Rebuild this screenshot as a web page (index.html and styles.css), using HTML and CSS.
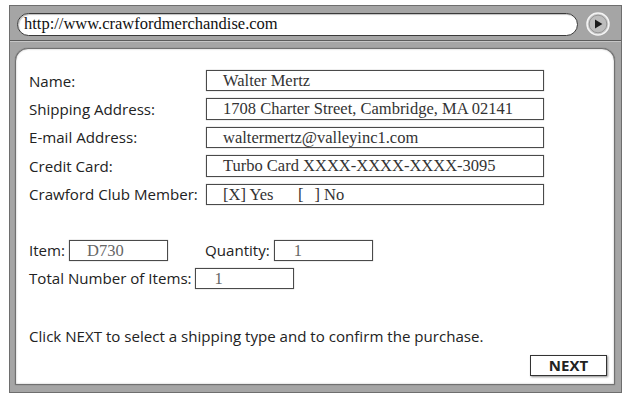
FILE: index.html
```html
<!DOCTYPE html>
<html>
<head>
<meta charset="utf-8">
<link rel="stylesheet" href="styles.css">
</head>
<body>
<div class="window">
  <div class="toolbar">
    <div class="url">http://www.crawfordmerchandise.com</div>
    <div class="go">
      <svg width="24" height="24" viewBox="0 0 24 24">
        <circle cx="12" cy="12" r="11" fill="#c9c9c9" stroke="#f4f4f4" stroke-width="1.5"/>
        <circle cx="12" cy="12" r="8.8" fill="#bdbdbd" stroke="#8a8a8a" stroke-width="0.8"/>
        <path d="M9 7.4 L16.4 12 L9 16.6 Z" fill="#1a1a1a"/>
      </svg>
    </div>
  </div>
  <div class="panel">
    <div class="form">
      <div class="label">Name:</div><div class="field">Walter Mertz</div>
      <div class="label">Shipping Address:</div><div class="field">1708 Charter Street, Cambridge, MA 02141</div>
      <div class="label">E-mail Address:</div><div class="field">waltermertz@valleyinc1.com</div>
      <div class="label">Credit Card:</div><div class="field">Turbo Card XXXX-XXXX-XXXX-3095</div>
      <div class="label">Crawford Club Member:</div><div class="field"><span class="opt">[X] Yes</span><span>[<span class="blank"></span>] No</span></div>
    </div>
    <div class="items">
      <div class="line">
        <span class="label">Item:</span><span class="field small item">D730</span>
        <span class="label qty">Quantity:</span><span class="field small qf">1</span>
      </div>
      <div class="line">
        <span class="label">Total Number of Items:</span><span class="field small tf">1</span>
      </div>
    </div>
    <p class="note">Click NEXT to select a shipping type and to confirm the purchase.</p>
    <div class="actions"><button class="next">NEXT</button></div>
  </div>
</div>
</body>
</html>
```
FILE: styles.css
```css
* { box-sizing: border-box; }
html, body { margin: 0; padding: 0; background: #fff; }
body { width: 633px; height: 402px; overflow: hidden; }

.window {
  margin: 5px 0 0 9px;
  width: 613px;
  height: 388px;
  background: #a5a5a5;
  border: 1px solid #6e6e6e;
  display: flex;
  flex-direction: column;
  padding: 0 6px 7px 5px;
}

.toolbar {
  height: 35px;
  display: flex;
  align-items: center;
  gap: 8px;
  border-bottom: 1px solid #5c5c5c;
  box-shadow: 0 1px 0 #c6c6c6;
  margin: 0 -6px 0 -5px;
  padding-left: 7px;
  padding-right: 11px;
}

.url {
  flex: 1;
  height: 23px;
  margin-top: 2px;
  background: #fff;
  border: 1.5px solid #3a3a3a;
  border-radius: 11.5px;
  font-family: "Liberation Serif", serif;
  font-size: 16.5px;
  line-height: 20px;
  padding-left: 6px;
  color: #111;
  box-shadow: inset 1px 1px 1px rgba(0,0,0,0.25);
}

.go { width: 24px; height: 24px; margin-top: 2px; }
.go svg { display: block; }

.panel {
  flex: 1;
  margin-top: 7px;
  background: #fff;
  border: 1px solid #707070;
  border-radius: 13px 13px 0 0;
  box-shadow: inset 0 0 2px rgba(0,0,0,0.3), 0 0 1px #555;
  padding: 21px 0 0 13px;
  font-family: "Open Sans", sans-serif;
  font-size: 15.1px;
  color: #222;
  display: flex;
  flex-direction: column;
}

.form {
  display: grid;
  grid-template-columns: 177px 338px;
  row-gap: 7px;
  align-items: center;
}

.label { white-space: nowrap; }

.field {
  height: 21.4px;
  border: 1px solid #4a4a4a;
  box-shadow: 0 0 1px rgba(0,0,0,0.4);
  font-family: "Liberation Serif", serif;
  font-size: 16.5px;
  line-height: 19px;
  padding-left: 16px;
  color: #333;
  white-space: nowrap;
  background: #fff;
}

.opt { display: inline-block; width: 75px; }
.blank { display: inline-block; width: 11px; }

.items {
  margin-top: 35px;
  display: flex;
  flex-direction: column;
  gap: 7px;
}

.line { display: flex; align-items: center; }

.field.small { display: inline-block; width: 99px; color: #666; height: 21px; }
.item { margin-left: 4px; padding-left: 17px; }
.qty { margin-left: 37px; }
.qf { margin-left: 4px; padding-left: 19px; }
.tf { margin-left: 3px; padding-left: 19px; width: 100px; }

.note { margin: 37px 0 0; }

.actions { display: flex; justify-content: flex-end; margin-top: 9px; padding-right: 7px; }

.next {
  width: 77px;
  height: 21px;
  background: #fff;
  border: 1px solid #333;
  box-shadow: 1px 1px 2px rgba(0,0,0,0.45);
  font-family: "Open Sans", sans-serif;
  font-weight: 700;
  font-size: 15px;
  color: #222;
  padding: 0;
  line-height: 18px;
}
```
